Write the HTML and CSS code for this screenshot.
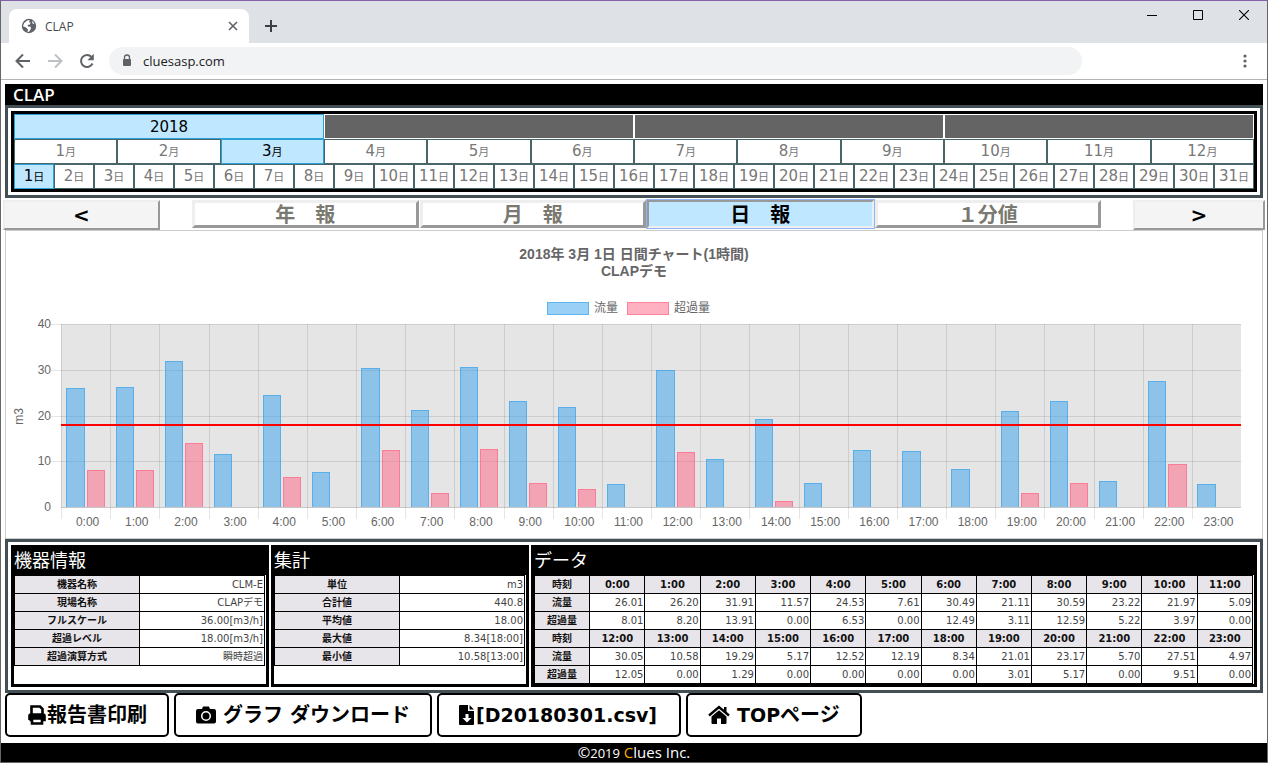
FILE: index.html
```html
<!DOCTYPE html>
<html lang="ja">
<head>
<meta charset="utf-8">
<title>CLAP</title>
<link rel="stylesheet" href="styles.css">
</head>
<body>
<div class="window">
  <header class="tab-strip">
    <div class="tab">
      <svg class="tab-globe" viewBox="0 0 16 16"><circle cx="8" cy="8" r="7.2" fill="#5f6368"/><path d="M3 5.2 6.2 2.4 8.7 2.1 8 4.2 9.6 4.6 8.9 6.6 6.6 7 7 8.6 9.8 8.8 9.9 11 8 13.8 6.6 14 6.9 11.6 5 9.6 2 8.2zM11 2.7 13.3 5.3 12.3 6.2 11.4 5z" fill="#fff"/></svg>
      <span class="tab-title">CLAP</span>
      <button class="icon-button"><svg width="10" height="10" viewBox="0 0 10 10"><path d="M1 1l8 8M9 1l-8 8" stroke="#5f6368" stroke-width="1.6"/></svg></button>
    </div>
    <button class="icon-button new-tab"><svg width="14" height="14" viewBox="0 0 14 14"><path d="M7 1v12M1 7h12" stroke="#3c4043" stroke-width="2"/></svg></button>
    <div class="window-controls">
      <button class="icon-button"><svg width="10" height="10" viewBox="0 0 10 10"><path d="M0 5.5h10" stroke="#000"/></svg></button>
      <button class="icon-button"><svg width="10" height="10" viewBox="0 0 10 10"><path d="M.5.5h9v9h-9z" fill="none" stroke="#000"/></svg></button>
      <button class="icon-button"><svg width="10" height="10" viewBox="0 0 10 10"><path d="M0 0l10 10M10 0L0 10" stroke="#000" stroke-width="1.1"/></svg></button>
    </div>
  </header>
  <nav class="toolbar">
    <button class="icon-button"><svg width="16" height="16" viewBox="0 0 16 16"><path d="M15 8H2M8 1.5L1.5 8 8 14.5" fill="none" stroke="#5f6368" stroke-width="2"/></svg></button>
    <button class="icon-button"><svg width="16" height="16" viewBox="0 0 16 16"><path d="M1 8h13M8 1.500L14.500 8 8 14.500" fill="none" stroke="#bdc1c6" stroke-width="2"/></svg></button>
    <button class="icon-button"><svg width="16" height="16" viewBox="0 0 16 16"><path d="M13.500 10.500A6 6 0 1 1 12.500 4" fill="none" stroke="#5f6368" stroke-width="2"/><path d="M14.800.8v6.400H8.400z" fill="#5f6368"/></svg></button>
    <label class="address">
      <svg width="10" height="14" viewBox="0 0 10 14"><path d="M2.500 6V3.500a2.500 2.500 0 0 1 5 0V6" fill="none" stroke="#5f6368" stroke-width="1.300"/><rect x="1" y="5" width="8" height="7" rx="1" fill="#5f6368"/></svg>
      <input class="address-input" type="text" value="cluesasp.com">
    </label>
    <button class="icon-button menu-button"><svg width="4" height="14" viewBox="0 0 4 14"><g fill="#5f6368"><circle cx="2" cy="2" r="1.600"/><circle cx="2" cy="7" r="1.600"/><circle cx="2" cy="12" r="1.600"/></g></svg></button>
  </nav>

  <main class="page">
    <h1 class="brand">CLAP</h1>
    <section class="frame">
      <div class="calendar">
        <div class="years">
          <button class="cell selected">2018</button>
          <button class="cell empty" disabled></button>
          <button class="cell empty" disabled></button>
          <button class="cell empty" disabled></button>
        </div>
        <div class="months" id="months"></div>
        <div class="days" id="days"></div>
      </div>
    </section>

    <nav class="report-nav">
      <button class="step">&lt;</button>
      <div class="reports">
        <button class="report">年　報</button>
        <button class="report">月　報</button>
        <button class="report active">日　報</button>
        <button class="report">１分値</button>
      </div>
      <button class="step">&gt;</button>
    </nav>

    <section class="chart">
      <h2 class="chart-title">2018年 3月 1日 日間チャート(1時間)<br>CLAPデモ</h2>
      <div class="legend">
        <span class="legend-item"><i class="swatch flow"></i>流量</span>
        <span class="legend-item"><i class="swatch over"></i>超過量</span>
      </div>
      <div class="chart-body">
        <div class="axis-title"><span>m3</span></div>
        <div class="axis-y"><span>40</span><span>30</span><span>20</span><span>10</span><span>0</span></div>
        <div class="plot" id="plot">
          <div class="grid-lines"><i></i><i></i><i></i><i></i></div>
        </div>
      </div>
    </section>

    <section class="frame">
      <div class="panels">
        <section class="panel">
          <h2 class="panel-title">機器情報</h2>
          <table class="info">
            <tr><th>機器名称</th><td>CLM-E</td></tr>
            <tr><th>現場名称</th><td>CLAPデモ</td></tr>
            <tr><th>フルスケール</th><td>36.00[m3/h]</td></tr>
            <tr><th>超過レベル</th><td>18.00[m3/h]</td></tr>
            <tr><th>超過演算方式</th><td>瞬時超過</td></tr>
          </table>
        </section>
        <section class="panel">
          <h2 class="panel-title">集計</h2>
          <table class="info">
            <tr><th>単位</th><td>m3</td></tr>
            <tr><th>合計値</th><td>440.8</td></tr>
            <tr><th>平均値</th><td>18.00</td></tr>
            <tr><th>最大値</th><td>8.34[18:00]</td></tr>
            <tr><th>最小値</th><td>10.58[13:00]</td></tr>
          </table>
        </section>
        <section class="panel">
          <h2 class="panel-title">データ</h2>
          <table class="info" id="data"></table>
        </section>
      </div>
    </section>

    <div class="actions">
      <button class="action"><svg width="20" height="20" viewBox="0 0 20 20"><path d="M4.500 9V1.500H13L15.500 4v5M2.500 15V11q0-1.500 1.500-1.500h12q1.500 0 1.500 1.500v4h-2.500M2.500 15H5M5 13.500h10V18.500H5z" fill="none" stroke="#000" stroke-width="2.600"/><path d="M2 9h16v5H2z"/></svg>報告書印刷</button>
      <button class="action"><svg class="spaced" width="20" height="20" viewBox="0 0 20 20"><path fill-rule="evenodd" d="M2 4h4l1-2.500h6L14 4h4q2 0 2 2v10.500q0 2-2 2H2q-2 0-2-2V6q0-2 2-2zM10 6a5 5 0 1 0 0 10 5 5 0 0 0 0-10zM10 7.500a3.500 3.500 0 1 1 0 7 3.500 3.500 0 0 1 0-7z"/></svg>グラフ ダウンロード</button>
      <button class="action file"><svg width="16" height="20" viewBox="0 0 16 20"><path d="M1 0H9V6H15V19q0 1-1 1H1q-1 0-1-1V1q0-1 1-1zM10.500 0 15 4.500H10.500z"/><path d="M6.500 9h3v4H12.500L8 17.500 3.500 13h3z" fill="#fff"/></svg><span class="file-name">[D20180301.csv]</span></button>
      <button class="action"><svg class="spaced" width="22" height="20" viewBox="0 0 22 20"><path d="M1 10.500 11 2 21 10.500" fill="none" stroke="#000" stroke-width="2.400"/><path d="M16 2h2.500v6L16 6zM11 5.300l7.500 6.200V18q0 1-1 1H13v-5.500H9V19H4.500q-1 0-1-1v-6.500z"/></svg><span class="top-label">TOP</span>ページ</button>
    </div>
  </main>
  <footer class="footer">©<small class="year">2019</small> <span class="initial">C</span>lues Inc.</footer>
</div>
<script src="app.js"></script>
</body>
</html>
```
FILE: styles.css
```css
* { box-sizing: border-box; }
body {
  margin: 0;
  background: #fff;
  font-family: "DejaVu Sans", "Noto Sans CJK JP", sans-serif;
}
button { font: inherit; color: inherit; padding: 0; margin: 0; }
h1, h2 { margin: 0; font-weight: 400; }
svg { flex: none; }

.window {
  min-height: 100vh;
  display: flex;
  flex-direction: column;
  border: 1px solid #666;
  border-top-color: #8560ad;
}

/* Browser chrome */
.icon-button {
  display: flex;
  align-items: center;
  justify-content: center;
  width: 32px;
  height: 28px;
  border: 0;
  background: none;
}
.tab-strip { display: flex; height: 42px; padding-left: 8px; background: #dee1e6; }
.tab {
  display: flex;
  align-items: center;
  width: 240px;
  height: 34px;
  margin-top: 8px;
  padding-left: 12px;
  border-radius: 8px 8px 0 0;
  background: #fff;
}
.tab-globe { width: 16px; height: 16px; }
.tab-title { flex: 1; margin-left: 8px; font: 12px "Open Sans", sans-serif; color: #45494d; }
.new-tab { margin: 11px 0 0 6px; }
.window-controls { display: flex; gap: 14px; margin-left: auto; padding-right: 7px; }
.toolbar {
  display: flex;
  align-items: center;
  height: 37px;
  padding: 0 6px;
  border-bottom: 1px solid #b3b3b3;
}
.address {
  display: flex;
  align-items: center;
  gap: 11px;
  flex: 1;
  height: 28px;
  margin-left: 6px;
  padding-left: 13px;
  border-radius: 14px;
  background: #f1f3f4;
}
.address-input {
  flex: 1;
  padding: 0;
  border: 0;
  background: none;
  font: 13px "Open Sans", sans-serif;
  color: #202124;
}
.menu-button { margin-left: 147px; }

/* Page */
.page { padding: 4px 4px 0; }
.brand {
  height: 21px;
  padding-left: 8px;
  background: #000;
  color: #fff;
  font: 600 17px/21px "Open Sans", sans-serif;
}
.frame { padding: 3px; border: 3px solid #434f54; }

.calendar { border: 3px solid #000; color: #777; font-size: 15px; }
.years, .months, .days { display: grid; height: 25px; }
.years { grid-template-columns: repeat(4, 1fr); }
.months { grid-template-columns: repeat(12, 1fr); }
.days { grid-template-columns: repeat(31, 1fr); }
.cell { min-width: 0; border: 1px solid #48666a; background: #fff; line-height: 20px; white-space: nowrap; }
.cell small { font-size: 11px; }
.cell.empty { border-color: #fff; background: #646464; }
.cell.selected { border-color: #2ba3da; background: #bfe7ff; color: #000; }

.report-nav {
  display: grid;
  grid-template-columns: 157px 1fr 132px;
  gap: 32px;
  margin: 2px -2px 0;
  font-size: 20px;
  font-weight: 700;
}
.step { height: 30px; border: 2px solid; border-color: #eee #999 #999 #eee; background: #f4f4f4; line-height: 24px; }
.reports { display: grid; grid-template-columns: repeat(4, 1fr); gap: 1px; }
.report {
  height: 28px;
  padding-top: 2px;
  border: 3px solid;
  border-color: #eee #999 #999 #eee;
  background: #fff;
  color: #7a7970;
  line-height: 20px;
}
.report.active {
  border-width: 2px;
  border-color: #999 #eee #eee #999;
  background: #bfe7ff;
  color: #000;
  box-shadow: 0 0 0 1px #8fb4f7;
}

/* Chart */
.chart {
  height: 309px;
  padding: 15px 21px 0 6px;
  border: 1px solid #ccc;
  color: #666;
  font: 12px "Liberation Sans", "Noto Sans CJK JP", sans-serif;
}
.chart-title { padding-left: 15px; font-size: 14px; font-weight: 700; line-height: 17px; text-align: center; }
.legend { display: flex; justify-content: center; gap: 9px; height: 15px; margin: 21px 0 8px 4px; line-height: 15px; }
.legend-item { display: flex; align-items: center; gap: 5px; }
.swatch { width: 42px; height: 13px; border: 1px solid; }
.chart-body { display: flex; height: 184px; }
.axis-title { display: flex; align-items: center; width: 18px; }
.axis-title span { writing-mode: vertical-rl; transform: rotate(180deg); }
.axis-y {
  display: flex;
  flex-direction: column;
  justify-content: space-between;
  width: 21px;
  margin: -7px 10px -6px 0;
  line-height: 14px;
  text-align: right;
}
.plot { position: relative; display: flex; flex: 1; background: #e5e5e5; border-bottom: 1px solid #c8c8c8; }
.grid-lines { position: absolute; inset: 0 0 0 -10px; display: grid; grid-template-rows: repeat(4, 1fr); }
.grid-lines i { border-top: 1px solid rgba(0, 0, 0, .1); }
.hour { position: relative; display: flex; align-items: flex-end; justify-content: center; gap: 2px; flex: 1; }
.hour::before { content: ""; position: absolute; inset: 0 auto -12px 0; border-left: 1px solid rgba(0, 0, 0, .1); }
.bar { width: 37%; border: 1px solid; border-bottom: 0; }
.bar.none { visibility: hidden; }
.flow { background: rgba(54, 162, 235, .5); border-color: rgba(54, 162, 235, .6); }
.over { background: rgba(255, 99, 132, .5); border-color: rgba(255, 99, 132, .6); }
.hour-label { position: absolute; top: 100%; left: 4px; right: 0; margin-top: 8px; line-height: 14px; text-align: center; }
.limit { position: absolute; left: 0; right: 0; height: 2px; margin-bottom: -1px; background: #f00; }

/* Tables */
.panels { display: grid; grid-template-columns: 258px 258px 1fr; gap: 2px; }
.panel { border: 3px solid #000; min-height: 142px; }
.panel-title { height: 27px; background: #000; color: #fff; font-size: 18px; line-height: 26px; }
.info {
  width: calc(100% - 1px);
  table-layout: fixed;
  border-collapse: collapse;
  color: #444;
  font-size: 10px;
}
.info th, .info td { height: 18px; padding: 0 1px; border: 1px solid #000; line-height: 17px; }
.info th { background: #e8e5ea; color: #111; font-weight: 700; }
.info td { text-align: right; }

.actions { display: flex; gap: 5px; font-size: 20px; font-weight: 700; }
.action {
  display: flex;
  align-items: center;
  height: 44px;
  padding: 0 20px;
  border: 2px solid #000;
  border-radius: 5px;
  background: #fff;
  color: #000;
  line-height: 24px;
}
.action.file { padding-right: 22px; }
.action .spaced { margin-right: 7px; }
.file svg { margin-right: 1px; }
.file-name, .top-label { font-size: 19px; }

.footer {
  height: 19px;
  margin-top: 6px;
  background: #000;
  color: #fff;
  font: 500 15px/19px "Open Sans", sans-serif;
  text-align: center;
}
.year { font-size: 13px; }
.initial { color: #ffa500; }
```
FILE: app.js
```js
const flow = [26.01, 26.20, 31.91, 11.57, 24.53, 7.61, 30.49, 21.11, 30.59, 23.22, 21.97, 5.09,
  30.05, 10.58, 19.29, 5.17, 12.52, 12.19, 8.34, 21.01, 23.17, 5.70, 27.51, 4.97];
const over = [8.01, 8.20, 13.91, 0, 6.53, 0, 12.49, 3.11, 12.59, 5.22, 3.97, 0,
  12.05, 0, 1.29, 0, 0, 0, 0, 3.01, 5.17, 0, 9.51, 0];
const scaleMax = 40;
const limit = 18;

function cells(id, count, unit, selected) {
  let html = '';
  for (let n = 1; n <= count; n++) {
    html += `<button class="cell${n === selected ? ' selected' : ''}">${n}<small>${unit}</small></button>`;
  }
  document.getElementById(id).innerHTML = html;
}
cells('months', 12, '月', 3);
cells('days', 31, '日', 1);

function bar(kind, value) {
  return `<div class="bar ${kind}${value ? '' : ' none'}" style="height:${value / scaleMax * 100}%"></div>`;
}
const hours = flow.map((value, h) =>
  `<div class="hour">${bar('flow', value)}${bar('over', over[h])}<span class="hour-label">${h}:00</span></div>`);
document.getElementById('plot').insertAdjacentHTML('beforeend',
  hours.join('') + `<div class="limit" style="bottom:${limit / scaleMax * 100}%"></div>`);

let rows = '';
for (const start of [0, 12]) {
  const times = flow.slice(start, start + 12).map((_, i) => `<th>${start + i}:00</th>`).join('');
  const values = list => list.slice(start, start + 12).map(v => `<td>${v.toFixed(2)}</td>`).join('');
  rows += `<tr><th>時刻</th>${times}</tr><tr><th>流量</th>${values(flow)}</tr><tr><th>超過量</th>${values(over)}</tr>`;
}
document.getElementById('data').innerHTML = rows;
```
